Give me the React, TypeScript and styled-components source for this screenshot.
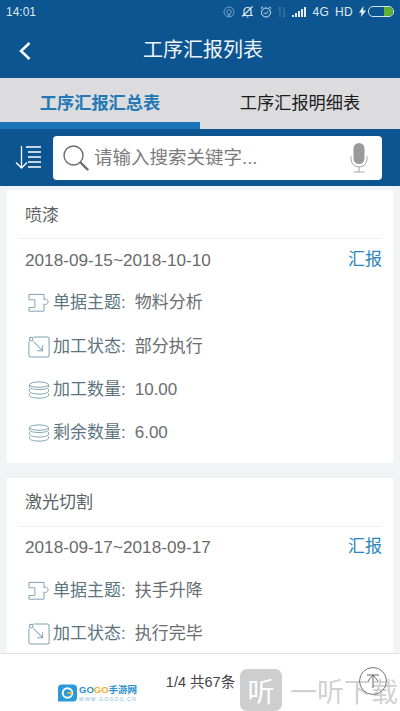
import styled, { createGlobalStyle } from "styled-components";
import { ReactNode } from "react";

const GlobalStyle = createGlobalStyle`
  html, body { margin: 0; padding: 0; }
  body {
    font-family: "Liberation Sans", "Noto Sans CJK SC", sans-serif;
    background: #f2f3f5;
  }
`;

const stroke = "#7fa3b2";

const PuzzleIcon = () => (
  <svg width="22" height="20" viewBox="0 0 24 22" fill="none" stroke={stroke} strokeWidth="1.100">
    <path d="M1 1.500h16.500v6c.8-1.200 4.500-1.200 4.500 2.200s-3.700 3.400-4.500 2.200v8.100H1V16h6.500V7.500H1z" />
  </svg>
);

const ArrowBoxIcon = () => (
  <svg width="22" height="22" viewBox="0 0 24 24" fill="none" stroke={stroke} strokeWidth="1.100">
    <path d="M6 1h15a2 2 0 0 1 2 2v18a2 2 0 0 1-2 2H3a2 2 0 0 1-2-2V6" />
    <circle cx="3.500" cy="3.500" r="2" />
    <path d="M6 6l10 10M16 10v6h-6" />
  </svg>
);

const StackIcon = () => (
  <svg width="22" height="18" viewBox="0 0 24 20" fill="none" stroke={stroke} strokeWidth="1.100">
    <ellipse cx="12" cy="4" rx="10.500" ry="3" />
    <path d="M1.500 4v2.500c0 1.700 4.700 3 10.500 3s10.500-1.300 10.500-3V4" />
    <path d="M1.500 9v2.500c0 1.700 4.700 3 10.500 3s10.500-1.300 10.500-3V9" />
    <path d="M1.500 14v2c0 1.700 4.700 3 10.500 3s10.500-1.300 10.500-3v-2" />
  </svg>
);

const StatusIcons = () => (
  <StatusRight>
    <svg width="12" height="12" viewBox="0 0 12 12" fill="none" stroke="#6ea3c9" strokeWidth="1">
      <circle cx="6" cy="6" r="5" />
      <circle cx="6" cy="6" r="2.300" />
      <path d="M4.500 11l1.500-3 1.500 3" />
    </svg>
    <svg width="13" height="13" viewBox="0 0 13 13" fill="none" stroke="#dbe8f1" strokeWidth="1.200">
      <path d="M3 9.500V6a3.500 3.500 0 0 1 7 0v3.500l1 1H2zM5.500 12h2M1.500 11.500L11.500 1.500" />
    </svg>
    <svg width="12" height="12" viewBox="0 0 12 12" fill="none" stroke="#dbe8f1" strokeWidth="1">
      <circle cx="6" cy="6.500" r="4.500" />
      <path d="M4 6.500l1.500 1.500L8 5.500M.8 2.500L3 .8M11.200 2.500L9 .8" />
    </svg>
    <svg width="8" height="12" viewBox="0 0 8 12" fill="none" stroke="#4f80a8" strokeWidth="1">
      <path d="M2 11V1L.5 3M6 1v10l1.500-2" />
    </svg>
    <SignalBars>
      {[2, 4, 6, 8, 10].map((h) => (
        <SignalBar key={h} $h={h} />
      ))}
    </SignalBars>
    <StatusLabel>4G</StatusLabel>
    <StatusLabel>HD</StatusLabel>
    <svg width="7" height="11" viewBox="0 0 7 11" fill="#e6eef5">
      <path d="M4.500 0L0 6.500h2.500L2 11l5-6.500H4.200z" />
    </svg>
    <Battery>
      <BatteryFill />
    </Battery>
  </StatusRight>
);

type RowProps = { icon: ReactNode; label: string; value: string };

const InfoRow = ({ icon, label, value }: RowProps) => (
  <Row>
    <IconSlot>{icon}</IconSlot>
    <RowLabel>{label}:</RowLabel>
    <RowValue>{value}</RowValue>
  </Row>
);

export default function App() {
  return (
    <Page>
      <GlobalStyle />
      <TopBlue>
        <StatusBar>
          <span>14:01</span>
          <StatusIcons />
        </StatusBar>
        <NavBar>
          <BackButton>
            <svg width="14" height="20" viewBox="0 0 14 20" fill="none" stroke="#fff" strokeWidth="2.500">
              <path d="M11.500 2L3 10l8.500 8" />
            </svg>
          </BackButton>
          <NavTitle>工序汇报列表</NavTitle>
        </NavBar>
      </TopBlue>
      <Tabs>
        <Tab $active>工序汇报汇总表</Tab>
        <Tab>工序汇报明细表</Tab>
      </Tabs>
      <SearchBand>
        <SortButton>
          <svg width="27" height="25" viewBox="0 0 27 25" fill="none" stroke="#fff" strokeWidth="1.300">
            <path d="M6.500 1v22M1 17.500l5.500 5.500 5.500-5.500" />
            <path d="M11 2h15M13 7h13M13 12h13M13 17h13M13 22h13" />
          </svg>
        </SortButton>
        <SearchBox>
          <svg width="27" height="27" viewBox="0 0 27 27" fill="none" stroke="#6b6b6b">
            <circle cx="11.500" cy="11.500" r="9.500" strokeWidth="1.400" />
            <path d="M18.500 18.500l7 7" strokeWidth="2.400" strokeLinecap="round" />
          </svg>
          <Placeholder>请输入搜索关键字...</Placeholder>
          <svg width="18" height="30" viewBox="0 0 18 30" fill="none">
            <rect x="3.500" y="0" width="11" height="21" rx="5.500" fill="#9a9a9a" />
            <path d="M1 13v3a8 8 0 0 0 16 0v-3M9 24v5M3.500 29h11" stroke="#a8a8a8" strokeWidth="1" />
          </svg>
        </SearchBox>
      </SearchBand>
      <List>
        <Card>
          <CardTitle>喷漆</CardTitle>
          <DateRow>
            <span>2018-09-15~2018-10-10</span>
            <ReportLink>汇报</ReportLink>
          </DateRow>
          <InfoRow icon={<PuzzleIcon />} label="单据主题" value="物料分析" />
          <InfoRow icon={<ArrowBoxIcon />} label="加工状态" value="部分执行" />
          <InfoRow icon={<StackIcon />} label="加工数量" value="10.00" />
          <InfoRow icon={<StackIcon />} label="剩余数量" value="6.00" />
        </Card>
        <Card>
          <CardTitle>激光切割</CardTitle>
          <DateRow>
            <span>2018-09-17~2018-09-17</span>
            <ReportLink>汇报</ReportLink>
          </DateRow>
          <InfoRow icon={<PuzzleIcon />} label="单据主题" value="扶手升降" />
          <InfoRow icon={<ArrowBoxIcon />} label="加工状态" value="执行完毕" />
        </Card>
      </List>
      <Footer>
        <Pager>1/4 共67条</Pager>
      </Footer>
      <GogoLogo>
        <svg width="19" height="18" viewBox="0 0 20 18">
          <path d="M4 0h12a4 4 0 0 1 4 4v10a4 4 0 0 1-4 4H0V4a4 4 0 0 1 4-4z" fill="#2a9ad8" />
          <circle cx="10" cy="9" r="5" fill="none" stroke="#fff" strokeWidth="2" />
          <path d="M10 9h5" stroke="#f0b72f" strokeWidth="2" />
        </svg>
        <GogoText>
          <GogoName>
            GO<GogoAccent>GO</GogoAccent>手游网
          </GogoName>
          <GogoUrl>WWW.GOGOO.CN</GogoUrl>
        </GogoText>
      </GogoLogo>
      <Watermark>
        <WatermarkBadge>听</WatermarkBadge>
        <WatermarkText>一听下载</WatermarkText>
      </Watermark>
      <TopButton>
        <svg width="16" height="16" viewBox="0 0 16 16" fill="none" stroke="#666" strokeWidth="1">
          <path d="M2 2h12M8 2v13M8 2L3 8M8 2l5 6" />
        </svg>
      </TopButton>
    </Page>
  );
}

const Page = styled.div`
  position: relative;
  width: 400px;
  height: 711px;
  overflow: hidden;
  display: flex;
  flex-direction: column;
  background: #f2f3f5;
`;

const TopBlue = styled.header`
  height: 78px;
  background: #0c5590;
  color: #fff;
`;

const StatusBar = styled.div`
  height: 23px;
  padding: 0 6px;
  display: flex;
  align-items: center;
  justify-content: space-between;
  font-size: 12px;
  color: #dfe9f2;
`;

const StatusRight = styled.div`
  display: flex;
  align-items: center;
  gap: 6px;
`;

const StatusLabel = styled.span`
  font-size: 12px;
  letter-spacing: 0.3px;
`;

const SignalBars = styled.div`
  display: flex;
  align-items: flex-end;
  gap: 1px;
  height: 10px;
`;

const SignalBar = styled.i<{ $h: number }>`
  display: block;
  width: 2px;
  height: ${(p) => p.$h}px;
  background: #e6eef5;
`;

const Battery = styled.div`
  width: 24px;
  height: 9px;
  margin-left: -4px;
  border: 1px solid #cfe3ee;
  border-radius: 5px;
  display: flex;
  justify-content: flex-end;
`;

const BatteryFill = styled.div`
  width: 9px;
  background: #5fb12f;
  border-radius: 0 5px 5px 0;
`;

const NavBar = styled.div`
  position: relative;
  height: 55px;
  display: flex;
  align-items: center;
  justify-content: center;
  padding-left: 6px;
  padding-bottom: 2px;
  box-sizing: border-box;
`;

const BackButton = styled.div`
  position: absolute;
  left: 18px;
  top: 18px;
  line-height: 0;
`;

const NavTitle = styled.h1`
  margin: 0;
  font-size: 20px;
  line-height: 24px;
  font-weight: 400;
  color: #eef4f8;
`;

const Tabs = styled.nav`
  height: 51px;
  display: flex;
  background: #dcdcde;
`;

const Tab = styled.div<{ $active?: boolean }>`
  flex: 1;
  display: flex;
  align-items: center;
  justify-content: center;
  box-sizing: border-box;
  padding-top: 2px;
  font-size: 17.200px;
  font-weight: ${(p) => (p.$active ? 700 : 400)};
  color: ${(p) => (p.$active ? "#2378b5" : "#1c1c1c")};
  border-bottom: 7px solid ${(p) => (p.$active ? "#1a74ba" : "transparent")};
`;

const SearchBand = styled.div`
  height: 57px;
  box-sizing: border-box;
  background: #0c5590;
  display: flex;
  align-items: center;
  padding: 0 18px 0 15px;
  gap: 11px;
`;

const SortButton = styled.div`
  line-height: 0;
`;

const SearchBox = styled.div`
  flex: 1;
  height: 44px;
  background: #fff;
  border-radius: 4px;
  display: flex;
  align-items: center;
  padding: 0 14px 0 9px;
  gap: 5px;
`;

const Placeholder = styled.span`
  flex: 1;
  font-size: 18.500px;
  line-height: 22px;
  color: #7c7c7c;
`;

const List = styled.main`
  flex: 1;
  min-height: 0;
  overflow: hidden;
  padding: 4px 7px 0;
  display: flex;
  flex-direction: column;
  gap: 15px;
`;

const Card = styled.section`
  background: #fff;
  padding: 0 11px 7.500px;
  flex-shrink: 0;
`;

const CardTitle = styled.div`
  height: 49px;
  box-sizing: border-box;
  padding: 3px 7px 0;
  display: flex;
  align-items: center;
  font-size: 17px;
  line-height: 20px;
  color: #5c6265;
  border-bottom: 1px solid #eceef0;
`;

const DateRow = styled.div`
  height: 41px;
  margin-bottom: 1.500px;
  padding: 0 0 0 7px;
  display: flex;
  align-items: center;
  justify-content: space-between;
  font-size: 17.200px;
  line-height: 20px;
  color: #6a6a6a;
`;

const ReportLink = styled.span`
  color: #2a86bd;
  font-size: 17px;
`;

const Row = styled.div`
  height: 43.400px;
  padding-left: 7px;
  display: flex;
  align-items: center;
  font-size: 17px;
  line-height: 20px;
`;

const RowLabel = styled.span`
  color: #5c7480;
  margin-right: 9px;
`;

const RowValue = styled.span`
  color: #6a6e70;
`;

const IconSlot = styled.div`
  width: 26px;
  margin-left: 3px;
  margin-right: -1px;
  display: flex;
  justify-content: flex-start;
  line-height: 0;
`;

const Footer = styled.footer`
  height: 58px;
  flex-shrink: 0;
  box-sizing: border-box;
  background: #fff;
  border-top: 1px solid #dfdfdf;
  display: flex;
  justify-content: center;
  padding: 16px 0 0 1px;
`;

const Pager = styled.span`
  font-size: 14.500px;
  color: #444;
`;

const GogoLogo = styled.div`
  position: absolute;
  left: 58px;
  top: 683px;
  display: flex;
  align-items: center;
  gap: 2px;
`;

const GogoText = styled.div`
  display: flex;
  flex-direction: column;
`;

const GogoName = styled.div`
  font-size: 9.500px;
  line-height: 13px;
  font-weight: 700;
  color: #2a8fd0;
  white-space: nowrap;
`;

const GogoAccent = styled.span`
  color: #eeb02b;
`;

const GogoUrl = styled.div`
  font-size: 5px;
  line-height: 6px;
  color: #7fb5d8;
  letter-spacing: 1.200px;
`;

const Watermark = styled.div`
  position: absolute;
  left: 240px;
  top: 669px;
  display: flex;
  align-items: center;
  gap: 8px;
`;

const WatermarkBadge = styled.div`
  width: 42px;
  height: 42px;
  border-radius: 7px;
  background: rgba(190, 190, 190, 0.75);
  color: #fff;
  font-size: 27px;
  display: flex;
  align-items: center;
  justify-content: center;
`;

const WatermarkText = styled.div`
  font-size: 27px;
  color: rgba(170, 170, 170, 0.55);
  white-space: nowrap;
`;

const TopButton = styled.div`
  position: absolute;
  left: 359px;
  top: 667px;
  width: 26px;
  height: 26px;
  border: 1px solid #777;
  border-radius: 50%;
  display: flex;
  align-items: center;
  justify-content: center;
`;
